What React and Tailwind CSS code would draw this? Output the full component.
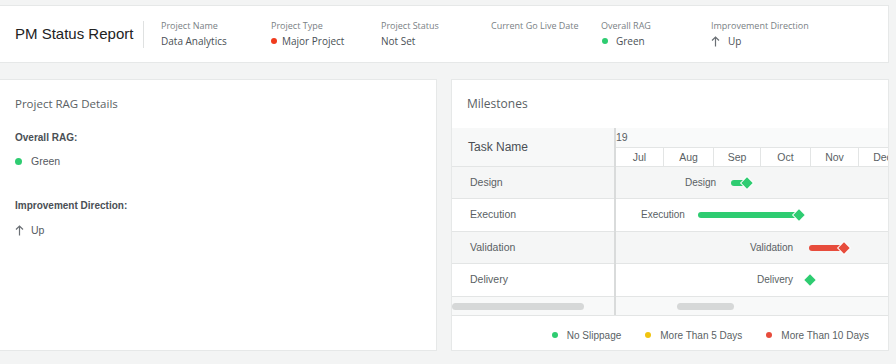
import React from 'react';

const MONTHS = [
  { name: 'Jul', w: 'w-[48px]' },
  { name: 'Aug', w: 'w-[50px]' },
  { name: 'Sep', w: 'w-[47px]' },
  { name: 'Oct', w: 'w-[50px]' },
  { name: 'Nov', w: 'w-[48px]' },
  { name: 'Dec', w: 'w-[48px]' },
];

const ROWS = [
  { name: 'Design', h: 'h-[32px]', bg: 'bg-[#f5f6f6]', labelX: 69, barX: 115, barW: 16, color: '#2ecc71' },
  { name: 'Execution', h: 'h-[33px]', bg: 'bg-white', labelX: 25, barX: 82, barW: 101, color: '#2ecc71' },
  { name: 'Validation', h: 'h-[32px]', bg: 'bg-[#f5f6f6]', labelX: 134, barX: 193, barW: 35, color: '#e74c3c' },
  { name: 'Delivery', h: 'h-[33px]', bg: 'bg-white', labelX: 141, barX: 0, barW: 0, diamondX: 194, color: '#2ecc71' },
];

const HeaderField = ({ label, children }) => (
  <div className="w-[110px] shrink-0 flex flex-col gap-[2px]">
    <span className="text-[9px] leading-[13px] text-[#7a7f85] whitespace-nowrap">{label}</span>
    <span className="text-[10px] leading-[15px] text-[#4a4f55] flex items-center gap-[5px] h-[15px] whitespace-nowrap">{children}</span>
  </div>
);

const Dot = ({ color }) => (
  <span className="inline-block w-[6px] h-[6px] rounded-full shrink-0" style={{ backgroundColor: color }} />
);

const UpArrow = () => (
  <svg width="9" height="11" viewBox="0 0 9 11" fill="none" stroke="#6b7075" strokeWidth="1.2">
    <path d="M4.5 10.5V1M1 4.5L4.5 1L8 4.5" />
  </svg>
);

export default function App() {
  return (
    <div className="w-[896px] h-[364px] bg-[#f3f4f4] overflow-hidden" style={{ fontFamily: '"Open Sans", sans-serif' }}>
      {/* Header */}
      <div className="mt-[5px] w-[889px] h-[58px] bg-white border border-l-0 border-[#e6e8e8] flex items-center">
        <div className="w-[144px] shrink-0 pl-[15px] text-[15px] text-[#222] border-r border-[#dfe1e1] h-[27px] flex items-center whitespace-nowrap" style={{ fontFamily: '"Liberation Sans", Arial, sans-serif' }}>
          PM Status Report
        </div>
        <div className="flex pl-[17px] -mt-[1px]">
          <HeaderField label="Project Name">Data Analytics</HeaderField>
          <HeaderField label="Project Type"><Dot color="#f03b1d" />Major Project</HeaderField>
          <HeaderField label="Project Status">Not Set</HeaderField>
          <HeaderField label="Current Go Live Date"></HeaderField>
          <HeaderField label="Overall RAG"><span className="mr-[3px] ml-[1px] inline-flex"><Dot color="#2ecc71" /></span>Green</HeaderField>
          <HeaderField label="Improvement Direction"><span className="mr-[3px] inline-flex"><UpArrow /></span>Up</HeaderField>
        </div>
      </div>

      <div className="mt-[16px] flex gap-[14px]">
        {/* Project RAG Details */}
        <div className="w-[437px] h-[272px] bg-white border border-l-0 border-[#e6e8e8] pl-[15px] pt-[16px]" style={{ fontFamily: '"Liberation Sans", Arial, sans-serif' }}>
          <div className="text-[11.5px] leading-[16px] text-[#5a5f64]" style={{ fontFamily: '"Open Sans", sans-serif' }}>Project RAG Details</div>
          <div className="mt-[20px] text-[10px] leading-[12px] font-bold text-[#4a4f55]">Overall RAG:</div>
          <div className="mt-[11px] flex items-center gap-[9px] text-[10.5px] leading-[12px] text-[#555a5f]">
            <span className="inline-block w-[7px] h-[7px] rounded-full bg-[#2ecc71]" />Green
          </div>
          <div className="mt-[33px] text-[10px] leading-[12px] font-bold text-[#4a4f55]">Improvement Direction:</div>
          <div className="mt-[12px] flex items-center gap-[7px] text-[10.5px] leading-[12px] text-[#555a5f]">
            <UpArrow />Up
          </div>
        </div>

        {/* Milestones */}
        <div className="w-[438px] h-[272px] bg-white border border-[#e6e8e8] flex flex-col">
          <div className="h-[48px] shrink-0 pl-[15px] pt-[15px] text-[12px] text-[#5a5f64]">Milestones</div>
          <div className="flex shrink-0" style={{ fontFamily: '"Liberation Sans", Arial, sans-serif' }}>
            {/* Task column */}
            <div className="w-[162px] flex flex-col">
              <div className="h-[38px] bg-[#f7f8f8] pl-[16px] flex items-center text-[12px] text-[#4a4f55]">Task Name</div>
              {ROWS.map((r) => (
                <div key={r.name} className={`${r.h} border-t border-[#e3e5e5] pl-[18px] flex items-center text-[10.5px] text-[#5a5f64] ${r.bg}`}>
                  {r.name}
                </div>
              ))}
              <div className="h-[19px] border-t border-[#e3e5e5] bg-[#f8f9f9] flex items-center">
                <div className="w-[132px] h-[7px] rounded-full bg-[#d6d8d8]" />
              </div>
            </div>
            <div className="w-[2px] bg-[#d9dbdb]" />
            {/* Timeline */}
            <div className="flex-1 flex flex-col overflow-hidden">
              <div className="h-[19px] bg-[#f9fafa] text-[10.5px] text-[#5a5f64] flex items-center">19</div>
              <div className="h-[19px] flex border-t border-[#e3e5e5] bg-white">
                {MONTHS.map((m) => (
                  <div key={m.name} className={`${m.w} shrink-0 border-r border-[#e3e5e5] flex items-center justify-center pt-[2px] text-[10.5px] text-[#5a5f64]`}>
                    {m.name}
                  </div>
                ))}
              </div>
              {ROWS.map((r) => (
                <div key={r.name} className={`relative ${r.h} border-t border-[#e3e5e5] ${r.bg}`}>
                  <span className="absolute top-[10px] text-[10px] leading-[12px] text-[#5a5f64]" style={{ left: r.labelX }}>{r.name}</span>
                  {r.barW > 0 && (
                    <span className="absolute top-[13px] h-[6px] rounded-full" style={{ left: r.barX, width: r.barW, backgroundColor: r.color }} />
                  )}
                  <span
                    className="absolute top-[12px] w-[8px] h-[8px] rotate-45"
                    style={{ left: (r.diamondX ?? r.barX + r.barW) - 4, backgroundColor: r.color, boxShadow: '0 0 0 1px #fff' }}
                  />
                </div>
              ))}
              <div className="h-[19px] border-t border-[#e3e5e5] bg-[#f8f9f9] flex items-center">
                <div className="ml-[61px] w-[57px] h-[7px] rounded-full bg-[#d6d8d8]" />
              </div>
            </div>
          </div>
          <div className="flex-1 border-t border-[#e3e5e5] flex items-center justify-end pr-[19px] pt-[4px] gap-[24px] text-[10px] text-[#5a5f64]" style={{ fontFamily: '"Liberation Sans", Arial, sans-serif' }}>
            <span className="flex items-center gap-[9px]"><Dot color="#2ecc71" />No Slippage</span>
            <span className="flex items-center gap-[9px]"><Dot color="#f1c40f" />More Than 5 Days</span>
            <span className="flex items-center gap-[9px]"><Dot color="#e74c3c" />More Than 10 Days</span>
          </div>
        </div>
      </div>
    </div>
  );
}
